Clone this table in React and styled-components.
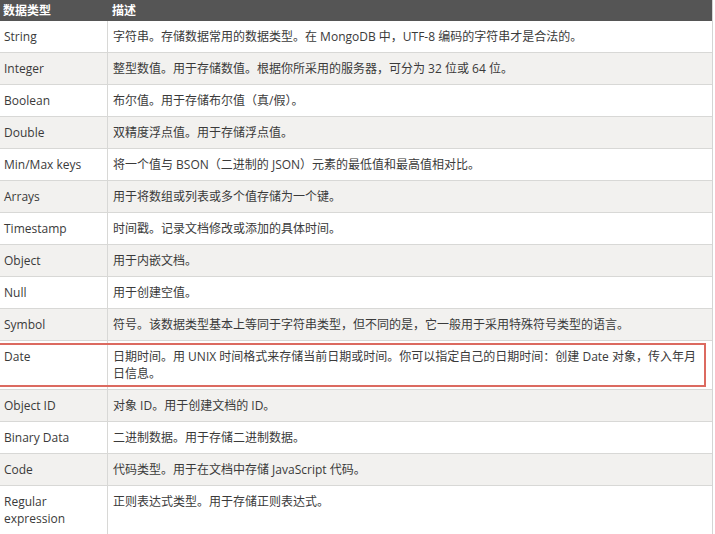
import React from 'react';
import styled, { createGlobalStyle } from 'styled-components';

const GlobalStyle = createGlobalStyle`
  html, body {
    margin: 0;
    padding: 0;
    background: #ffffff;
    overflow: hidden;
  }
`;

const Page = styled.div`
  width: 715px;
  height: 534px;
  overflow: hidden;
  font-family: 'Open Sans', 'Noto Sans CJK SC', sans-serif;
  font-size: 12px;
  line-height: 17px;
  color: #3a3a3a;
`;

const Table = styled.div`
  width: 712px;
  border-right: 1px solid #d4d4d4;
`;

const HeadRow = styled.div`
  display: grid;
  grid-template-columns: 108px 1fr;
  height: 21px;
  background: #555555;
  color: #ffffff;
  font-weight: bold;
  align-items: center;
`;

const HeadCell = styled.div`
  padding: 0 4px 0 ${(p) => p.$pad || 3}px;
`;

const Row = styled.div`
  position: relative;
  display: grid;
  grid-template-columns: 108px 1fr;
  background: ${(p) => (p.$shade ? '#f2f1ef' : '#ffffff')};
  border-bottom: 1px solid #d8d8d6;

  ${(p) =>
    p.$marked &&
    `
    &::after {
      content: '';
      position: absolute;
      left: -4px;
      right: 6px;
      top: 2px;
      bottom: 2px;
      border: 2px solid #dc6a60;
      pointer-events: none;
    }
  `}
`;

const TypeCell = styled.div`
  padding: 7px 4px;
  border-right: 1px solid #d8d8d6;
`;

const DescCell = styled.div`
  padding: 7px 8px 7px 5px;
`;

const rows = [
  ['String', '字符串。存储数据常用的数据类型。在 MongoDB 中，UTF-8 编码的字符串才是合法的。'],
  ['Integer', '整型数值。用于存储数值。根据你所采用的服务器，可分为 32 位或 64 位。'],
  ['Boolean', '布尔值。用于存储布尔值（真/假）。'],
  ['Double', '双精度浮点值。用于存储浮点值。'],
  ['Min/Max keys', '将一个值与 BSON（二进制的 JSON）元素的最低值和最高值相对比。'],
  ['Arrays', '用于将数组或列表或多个值存储为一个键。'],
  ['Timestamp', '时间戳。记录文档修改或添加的具体时间。'],
  ['Object', '用于内嵌文档。'],
  ['Null', '用于创建空值。'],
  ['Symbol', '符号。该数据类型基本上等同于字符串类型，但不同的是，它一般用于采用特殊符号类型的语言。'],
  ['Date', '日期时间。用 UNIX 时间格式来存储当前日期或时间。你可以指定自己的日期时间：创建 Date 对象，传入年月日信息。'],
  ['Object ID', '对象 ID。用于创建文档的 ID。'],
  ['Binary Data', '二进制数据。用于存储二进制数据。'],
  ['Code', '代码类型。用于在文档中存储 JavaScript 代码。'],
  ['Regular expression', '正则表达式类型。用于存储正则表达式。'],
];

const App = function () {
  return (
    <Page>
      <GlobalStyle />
      <Table>
        <HeadRow>
          <HeadCell>数据类型</HeadCell>
          <HeadCell $pad={4}>描述</HeadCell>
        </HeadRow>
        {rows.map(([type, desc], idx) => (
          <Row key={type} $shade={idx % 2 === 1} $marked={type === 'Date'}>
            <TypeCell>{type}</TypeCell>
            <DescCell>{desc}</DescCell>
          </Row>
        ))}
      </Table>
    </Page>
  );
};

export default App;
